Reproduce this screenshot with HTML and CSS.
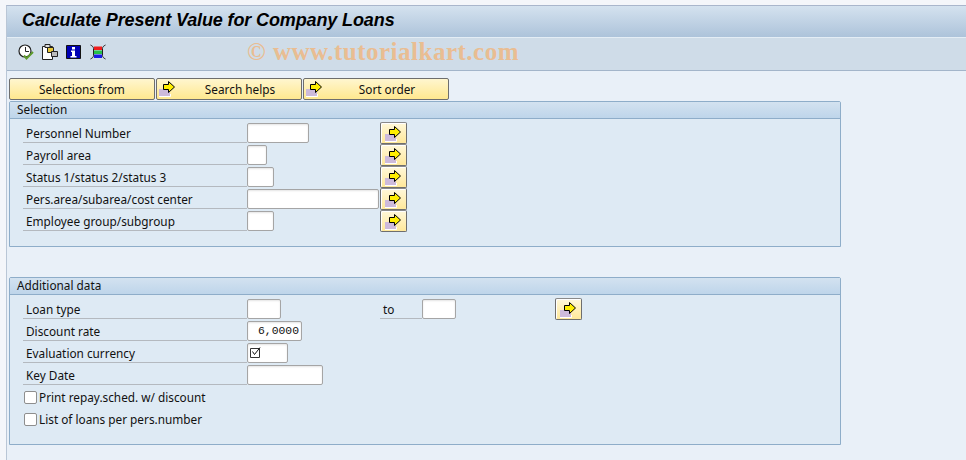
FILE: index.html
```html
<!DOCTYPE html>
<html lang="en">
<head>
    <meta charset="UTF-8">
    <title>Calculate Present Value for Company Loans</title>
    <link rel="stylesheet" href="styles.css">
</head>
<body>
    <svg class="defs">
        <symbol id="multi" viewBox="0 0 18 18">
            <path d="M0 10h11v8H0z" fill="#cdbadb"/>
            <path d="M0 17.500h11.500V15" stroke="#fff" fill="none"/>
            <path d="M4.500 5.500h5V2.500l6 5.500-6 5.500v-3h-5z" fill="#ffee00" stroke="#000"/>
        </symbol>
    </svg>
    <div class="window">
        <div class="title-bar">
            <h1>Calculate Present Value for Company Loans</h1>
        </div>
        <div class="tool-bar">
            <svg class="tool-icon" viewBox="0 0 16 16">
                <circle cx="7" cy="7" r="6" fill="#fff" stroke="#222" stroke-width="1.200"/>
                <path d="M7.500 3v4.500H11" fill="none" stroke="#222"/>
                <path d="M6 11.500l2.500 3L15 8" fill="none" stroke="#5d9a2c" stroke-width="2"/>
            </svg>
            <svg class="tool-icon" viewBox="0 0 16 16">
                <path d="M.5 2.500h10v13H.5z" fill="#fff" stroke="#222"/>
                <path d="M3 .5h5v3H3z" fill="#ddd" stroke="#222"/>
                <path d="M5.500 3.500h6v5h-6z" fill="#e8c93a" stroke="#222"/>
                <path d="M9.500 7.500h6v5h-6z" fill="#bbb" stroke="#222"/>
            </svg>
            <svg class="tool-icon" viewBox="0 0 16 16">
                <path d="M.5 1.500h14v13H.5z" fill="#0000b4" stroke="#111"/>
                <path d="M6 3h3v2.500H6zM5 6.500h4V12h1.500v1.500h-6V12H6V8H5z" fill="#fff"/>
            </svg>
            <svg class="tool-icon" viewBox="0 0 16 16">
                <path d="M.5 1C2.500 2 3.500 3 3.500 4.500v7C3.500 13 2.500 14 .5 15M15.500 1c-2 1-3 2-3 3.500v7c0 1.500 1 2.500 3 3.500" fill="none" stroke="#222"/>
                <path d="M4 2.500h8V6H4z" fill="#f01c1c"/>
                <path d="M4 6.500h8V10H4z" fill="#25c04a"/>
                <path d="M4 10.500h8V14H4z" fill="#1a1ae6"/>
            </svg>
            <span class="watermark">© www.tutorialkart.com</span>
        </div>
        <div class="content">
            <div class="button-row">
                <button class="top-btn">Selections from</button>
                <button class="top-btn has-icon"><svg class="btn-icon"><use href="#multi"/></svg>Search helps</button>
                <button class="top-btn has-icon"><svg class="btn-icon"><use href="#multi"/></svg>Sort order</button>
            </div>

            <section class="panel panel-selection">
                <h2>Selection</h2>
                <div class="rows">
                    <div class="row">
                        <label class="lbl">Personnel Number</label>
                        <div class="cell"><input class="w62" type="text"></div>
                        <button class="multi-btn"><svg><use href="#multi"/></svg></button>
                    </div>
                    <div class="row">
                        <label class="lbl">Payroll area</label>
                        <div class="cell"><input class="w20" type="text"></div>
                        <button class="multi-btn"><svg><use href="#multi"/></svg></button>
                    </div>
                    <div class="row">
                        <label class="lbl">Status 1/status 2/status 3</label>
                        <div class="cell"><input class="w27" type="text"></div>
                        <button class="multi-btn"><svg><use href="#multi"/></svg></button>
                    </div>
                    <div class="row">
                        <label class="lbl">Pers.area/subarea/cost center</label>
                        <div class="cell"><input class="w132" type="text"></div>
                        <button class="multi-btn"><svg><use href="#multi"/></svg></button>
                    </div>
                    <div class="row">
                        <label class="lbl">Employee group/subgroup</label>
                        <div class="cell"><input class="w27" type="text"></div>
                        <button class="multi-btn"><svg><use href="#multi"/></svg></button>
                    </div>
                </div>
            </section>

            <section class="panel panel-additional">
                <h2>Additional data</h2>
                <div class="rows">
                    <div class="row">
                        <label class="lbl">Loan type</label>
                        <div class="cell"><input class="w34" type="text"></div>
                        <label class="lbl-to">to</label>
                        <div class="cell"><input class="w34" type="text"></div>
                        <button class="multi-btn"><svg><use href="#multi"/></svg></button>
                    </div>
                    <div class="row">
                        <label class="lbl">Discount rate</label>
                        <div class="cell"><input class="w55 num" type="text" value="6,0000"></div>
                    </div>
                    <div class="row">
                        <label class="lbl">Evaluation currency</label>
                        <div class="cell">
                            <div class="check-field">
                                <svg viewBox="0 0 11 11"><path d="M.5 1.500h9v9h-9z" fill="none" stroke="#333"/><path d="M2.500 4.500l2 3 5.500-7" fill="none" stroke="#111"/></svg>
                            </div>
                        </div>
                    </div>
                    <div class="row">
                        <label class="lbl">Key Date</label>
                        <div class="cell"><input class="w76" type="text"></div>
                    </div>
                    <div class="row">
                        <label class="chk"><input type="checkbox">Print repay.sched. w/ discount</label>
                    </div>
                    <div class="row">
                        <label class="chk"><input type="checkbox">List of loans per pers.number</label>
                    </div>
                </div>
            </section>
        </div>
    </div>
</body>
</html>
```

FILE: styles.css
```css
html, body{
    margin: 0;
    height: 100%;
}
body{
    background-color: #f4f6fa;
    font-family: "Noto Sans", "Open Sans", sans-serif;
    font-size: 11.8px;
    color: #111;
    overflow: hidden;
}
.defs{
    display: none;
}
.window{
    margin: 5px 0 0 6px;
    border-top: 1px solid #a9b6cc;
    border-left: 1px solid #b9c6d6;
    height: 454px;
    background-color: #e9f0f8;
}
.title-bar{
    height: 31px;
    box-sizing: border-box;
    padding: 0 0 2px 15px;
    background: linear-gradient(#d4e2ef, #adc3da);
    display: flex;
    align-items: center;
}
h1{
    margin: 0;
    font-family: "Liberation Sans", sans-serif;
    font-size: 18px;
    font-style: italic;
    font-weight: bold;
    letter-spacing: -.12px;
    color: #000;
}
.tool-bar{
    height: 32px;
    border-top: 1px solid #e4edf5;
    border-bottom: 1px solid #a3b5ca;
    background-color: #cfdce8;
    display: flex;
    align-items: center;
    padding-left: 11px;
    position: relative;
}
.tool-icon{
    width: 16px;
    height: 16px;
    margin: 0 8px 4px 0;
}
.watermark{
    position: absolute;
    left: 240px;
    top: 0;
    font-family: "Liberation Serif", serif;
    font-size: 25px;
    font-weight: bold;
    letter-spacing: .5px;
    color: #e9bd92;
}
.content{
    padding: 7px 0 0 2px;
}
.button-row{
    display: flex;
    gap: 1px;
}
.top-btn{
    width: 146px;
    height: 22px;
    padding: 0;
    position: relative;
    font: inherit;
    color: #111;
    border: 1px solid #6e6e6e;
    border-radius: 2px;
    background: linear-gradient(#fff6cf, #ffe88f);
}
.has-icon{
    padding-left: 22px;
}
.btn-icon{
    position: absolute;
    left: 2px;
    top: 0;
    width: 18px;
    height: 18px;
}
.panel{
    width: 830px;
    border: 1px solid #8eadc9;
    border-radius: 2px 2px 0 0;
    background-color: #deeaf4;
    margin-top: 1px;
}
.panel-selection{
    height: 144px;
}
.panel-additional{
    height: 166px;
    margin-top: 30px;
}
h2{
    margin: 0;
    height: 16px;
    line-height: 15px;
    padding-left: 7px;
    font-size: 11.8px;
    font-weight: normal;
    background: linear-gradient(#d3e2f0, #bed5ea);
    border-bottom: 1px solid #8eadc9;
}
.rows{
    padding: 4px 0 0 13px;
}
.row{
    display: flex;
    height: 22px;
}
.lbl{
    width: 221px;
    padding-left: 3px;
    height: 19px;
    line-height: 21px;
    border-bottom: 1px solid #b4b9bf;
}
.cell{
    width: 133px;
}
.lbl-to{
    box-sizing: border-box;
    width: 42px;
    padding-left: 3px;
    height: 20px;
    line-height: 21px;
    border-bottom: 1px solid #b4b9bf;
}
input[type=text], .check-field{
    display: block;
    box-sizing: border-box;
    height: 20px;
    padding: 0 2px;
    margin: 0;
    border: 1px solid #a5a5a5;
    border-radius: 2px;
    background-color: #fff;
    box-shadow: inset 0 1px 2px #e4e4e4;
    outline: none;
}
.w20{ width: 20px; }
.w27{ width: 27px; }
.w34{ width: 34px; }
.w55{ width: 55px; }
.w62{ width: 62px; }
.w76{ width: 76px; }
.w132{ width: 132px; }
input.num{
    font-family: "Liberation Mono", monospace;
    font-size: 11.4px;
    text-align: right;
    color: #111;
}
.check-field{
    width: 41px;
    padding: 3px 0 0 2px;
}
.check-field svg{
    display: block;
    width: 11px;
    height: 11px;
}
.multi-btn{
    width: 27px;
    height: 22px;
    margin-top: -1px;
    padding: 0 0 0 4px;
    border: 1px solid #6e6e6e;
    border-top-color: #8a8a8a;
    border-radius: 2px;
    background: linear-gradient(#fff8da, #ffe89a);
    box-shadow: inset 1px 1px #fff;
}
.multi-btn svg{
    display: block;
    width: 18px;
    height: 18px;
}
.chk{
    display: flex;
    align-items: center;
    height: 20px;
    margin-left: 1px;
}
.chk input{
    appearance: none;
    width: 13px;
    height: 13px;
    margin: 0 2px 0 0;
    background-color: #fff;
    border: 1px solid #8e8e8e;
    border-radius: 2px;
}
```
